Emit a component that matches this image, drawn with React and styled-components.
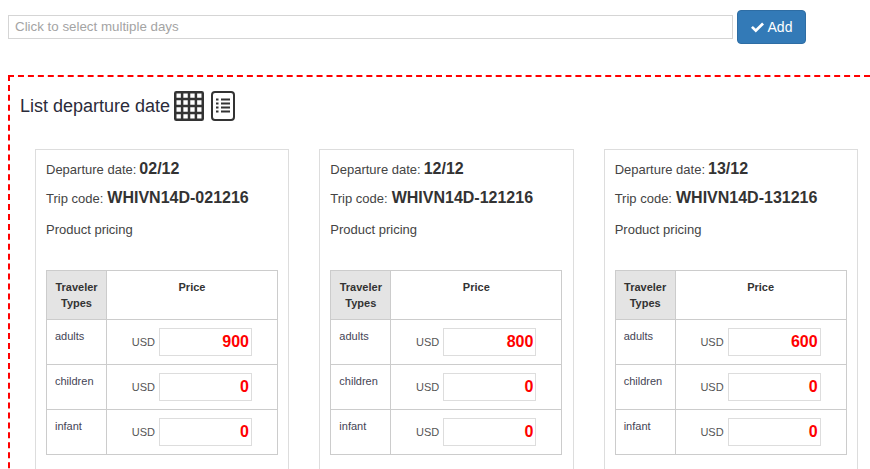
import React from 'react';
import styled, { createGlobalStyle } from 'styled-components';

const GlobalStyle = createGlobalStyle`
  html, body {
    margin: 0;
    padding: 0;
    background: #fff;
    overflow: hidden;
  }
  body {
    font-family: "Liberation Sans", Arial, sans-serif;
    font-size: 13px;
    color: #333;
  }
`;

const Page = styled.div`
  width: 870px;
  height: 469px;
  overflow: hidden;
  padding: 10px 0 0 8px;
  box-sizing: border-box;
`;

const PickerRow = styled.div`
  display: flex;
  align-items: center;
  gap: 4px;
  height: 34px;
`;

const DateInput = styled.input`
  width: 725px;
  height: 24px;
  box-sizing: border-box;
  border: 1px solid #d5d5d5;
  padding: 0 6px 2px;
  font: 13.33px "Liberation Sans", Arial, sans-serif;
  color: #333;
  outline: none;
  &::placeholder {
    color: #a4a4a4;
    opacity: 1;
  }
`;

const AddButton = styled.button`
  display: flex;
  align-items: center;
  justify-content: center;
  gap: 4px;
  width: 69px;
  height: 34px;
  padding: 0;
  background: #337ab7;
  border: 1px solid #2e6da4;
  border-radius: 4px;
  color: #fff;
  font: 14px "Liberation Sans", Arial, sans-serif;
`;

const ListSection = styled.section`
  margin-top: 31px;
  border-top: 2px dashed #f00;
  border-left: 2px dashed #f00;
  padding: 11px 0 0 10px;
  height: 400px;
`;

const SectionTitle = styled.div`
  display: flex;
  align-items: center;
  height: 36px;
  font-size: 18px;
  color: #2b2b3a;
`;

const IconGroup = styled.span`
  display: flex;
  align-items: center;
  gap: 7px;
  margin-left: 4px;
`;

const CardRow = styled.div`
  display: flex;
  gap: 30px;
  width: 900px;
  margin: 25px 0 0 15px;
`;

const Card = styled.article`
  flex: 0 0 254.33px;
  box-sizing: border-box;
  border: 1px solid #ddd;
  padding: 0 10px;
  height: 330px;
`;

const InfoLine = styled.div`
  display: flex;
  align-items: baseline;
  gap: ${(p) => p.$gap || 4}px;
  height: ${(p) => p.$height}px;
  line-height: ${(p) => p.$height}px;
  color: #444;
`;

const Strong = styled.b`
  font-size: ${(p) => p.$size}px;
  color: #333;
`;

const PriceTable = styled.table`
  width: 232px;
  margin-top: 18px;
  border-collapse: collapse;
  table-layout: fixed;
  font-size: 11px;
`;

const HeadCell = styled.th`
  border: 1px solid #ccc;
  background: ${(p) => (p.$shaded ? '#e4e4e4' : '#fff')};
  width: ${(p) => (p.$shaded ? '60px' : 'auto')};
  height: 49px;
  padding: 8px 4px 0;
  box-sizing: border-box;
  vertical-align: top;
  line-height: 16px;
  font-size: 11px;
  color: #333;
`;

const TypeCell = styled.td`
  border: 1px solid #ccc;
  height: 45px;
  padding: 8px 8px 0;
  box-sizing: border-box;
  vertical-align: top;
  line-height: 16px;
  color: #445;
`;

const PriceCell = styled.td`
  border: 1px solid #ccc;
  padding: 0 25px 0 0;
  box-sizing: border-box;
  vertical-align: middle;
`;

const PriceField = styled.div`
  display: flex;
  align-items: center;
  justify-content: flex-end;
  gap: 4px;
  color: #555;
`;

const PriceInput = styled.input`
  width: 93px;
  height: 28px;
  box-sizing: border-box;
  border: 1px solid #ddd;
  padding: 0 2px 0 0;
  text-align: right;
  font: bold 16px "Liberation Sans", Arial, sans-serif;
  color: #f00;
  outline: none;
`;

const CheckIcon = () => (
  <svg width="13" height="11" viewBox="0 0 13 11" fill="#fff">
    <path d="M0 5.8 1.9 3.9 4.8 6.8 11.1 0.5 13 2.4 4.8 10.6z" />
  </svg>
);

const GridIcon = () => (
  <svg width="30" height="30" viewBox="0 0 30 30" fill="none" stroke="#333" strokeWidth="2.5">
    <rect x="1.25" y="1.25" width="27.5" height="27.5" rx="1" />
    <path d="M8.1 1v28M15 1v28M21.9 1v28M1 8.1h28M1 15h28M1 21.9h28" />
  </svg>
);

const ListIcon = () => (
  <svg width="24" height="30" viewBox="0 0 24 30" fill="none" stroke="#333">
    <rect x="1" y="1" width="22" height="28" rx="3" strokeWidth="2" />
    <path
      d="M5 8.5h2.5M10 8.5h9M5 12.5h2.5M10 12.5h9M5 16.5h2.5M10 16.5h9M5 20.5h2.5M10 20.5h9"
      strokeWidth="2"
    />
  </svg>
);

const departures = [
  { date: '02/12', code: 'WHIVN14D-021216', adults: 900 },
  { date: '12/12', code: 'WHIVN14D-121216', adults: 800 },
  { date: '13/12', code: 'WHIVN14D-131216', adults: 600 },
];

const DepartureCard = ({ date, code, adults }) => {
  const rows = [
    ['adults', adults],
    ['children', 0],
    ['infant', 0],
  ];
  return (
    <Card>
      <InfoLine $height={38} $gap={3}>
        Departure date: <Strong $size={16}>{date}</Strong>
      </InfoLine>
      <InfoLine $height={20}>
        Trip code: <Strong $size={16}>{code}</Strong>
      </InfoLine>
      <InfoLine $height={44}>Product pricing</InfoLine>
      <PriceTable>
        <thead>
          <tr>
            <HeadCell $shaded>Traveler Types</HeadCell>
            <HeadCell>Price</HeadCell>
          </tr>
        </thead>
        <tbody>
          {rows.map(([type, price]) => (
            <tr key={type}>
              <TypeCell>{type}</TypeCell>
              <PriceCell>
                <PriceField>
                  USD <PriceInput readOnly value={price} />
                </PriceField>
              </PriceCell>
            </tr>
          ))}
        </tbody>
      </PriceTable>
    </Card>
  );
};

export default function App() {
  return (
    <Page>
      <GlobalStyle />
      <PickerRow>
        <DateInput placeholder="Click to select multiple days" />
        <AddButton>
          <CheckIcon /> Add
        </AddButton>
      </PickerRow>
      <ListSection>
        <SectionTitle>
          List departure date
          <IconGroup>
            <GridIcon />
            <ListIcon />
          </IconGroup>
        </SectionTitle>
        <CardRow>
          {departures.map((d) => (
            <DepartureCard key={d.date} {...d} />
          ))}
        </CardRow>
      </ListSection>
    </Page>
  );
}
